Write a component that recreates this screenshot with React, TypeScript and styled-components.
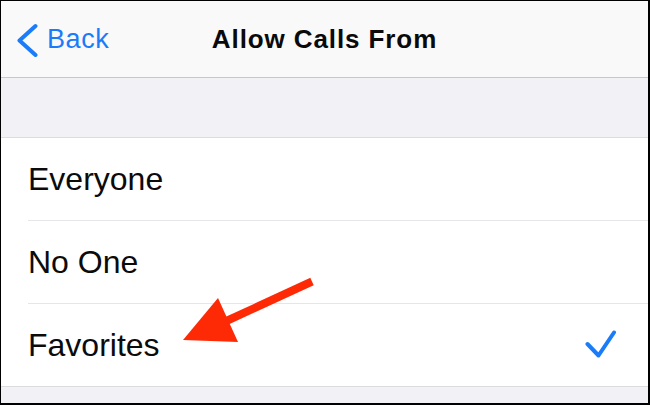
import React from "react";
import styled, { createGlobalStyle } from "styled-components";

const Global = createGlobalStyle`
  html, body { margin: 0; padding: 0; background: #ffffff; }
  * { box-sizing: border-box; }
`;

const Frame = styled.div`
  position: relative;
  width: 650px;
  height: 405px;
  border-style: solid;
  border-color: #000;
  border-width: 1px 2px 2px 1px;
  background: #f1f1f6;
  display: flex;
  flex-direction: column;
  overflow: hidden;
  font-family: "Liberation Sans", Arial, sans-serif;
`;

const NavBar = styled.div`
  height: 77px;
  flex: none;
  background: #f9f9f9;
  border-bottom: 1px solid #c8c8cb;
  display: grid;
  grid-template-columns: 1fr auto 1fr;
  align-items: center;
`;

const BackButton = styled.div`
  display: flex;
  align-items: center;
  gap: 8px;
  color: #1a7cf9;
  font-size: 27px;
  letter-spacing: 0.6px;
  justify-self: start;
  margin-left: 16px;
  margin-top: 1px;
`;

const Title = styled.div`
  font-weight: bold;
  font-size: 26px;
  letter-spacing: 0.9px;
  color: #0a0a0a;
  margin-top: 1px;
`;

const Gap = styled.div`
  height: 59px;
  flex: none;
`;

const List = styled.div`
  background: #fff;
  border-top: 1px solid #dcdce0;
  border-bottom: 1px solid #dcdce0;
  padding-left: 27px;
  flex: none;
`;

const Row = styled.div<{ $last?: boolean }>`
  height: ${(p) => (p.$last ? "82px" : "83px")};
  display: flex;
  align-items: center;
  justify-content: space-between;
  padding-right: 31px;
  border-bottom: ${(p) => (p.$last ? "none" : "1px solid #e6e6e9")};
  font-size: 32px;
  color: #0b0b0b;
`;

const Overlay = styled.svg`
  position: absolute;
  left: -1px;
  top: -1px;
  pointer-events: none;
`;

const Chevron = () => (
  <svg width="22" height="34" viewBox="0 0 22 34">
    <polyline
      points="18.5,3 2.5,17.5 18.5,32"
      fill="none"
      stroke="#1a7cf9"
      strokeWidth="4"
      strokeLinecap="round"
      strokeLinejoin="round"
    />
  </svg>
);

const Check = () => (
  <svg width="32" height="30" viewBox="0 0 32 30">
    <polyline
      points="2.5,14 13.5,25.5 29,2.5"
      fill="none"
      stroke="#1a7cf9"
      strokeWidth="4"
      strokeLinecap="round"
      strokeLinejoin="round"
    />
  </svg>
);

export default function App() {
  const items = ["Everyone", "No One", "Favorites"];
  return (
    <>
      <Global />
      <Frame>
        <NavBar>
          <BackButton>
            <Chevron />
            Back
          </BackButton>
          <Title>Allow Calls From</Title>
          <div />
        </NavBar>
        <Gap />
        <List>
          {items.map((t, i) => (
            <Row key={t} $last={i === items.length - 1}>
              {t}
              {t === "Favorites" && <Check />}
            </Row>
          ))}
        </List>
        <Overlay width="650" height="405" viewBox="0 0 650 405">
          <line x1="312" y1="281.5" x2="222" y2="323" stroke="#fe2a06" strokeWidth="8" />
          <polygon points="183,340 218,298 238,342" fill="#fe2a06" />
        </Overlay>
      </Frame>
    </>
  );
}
